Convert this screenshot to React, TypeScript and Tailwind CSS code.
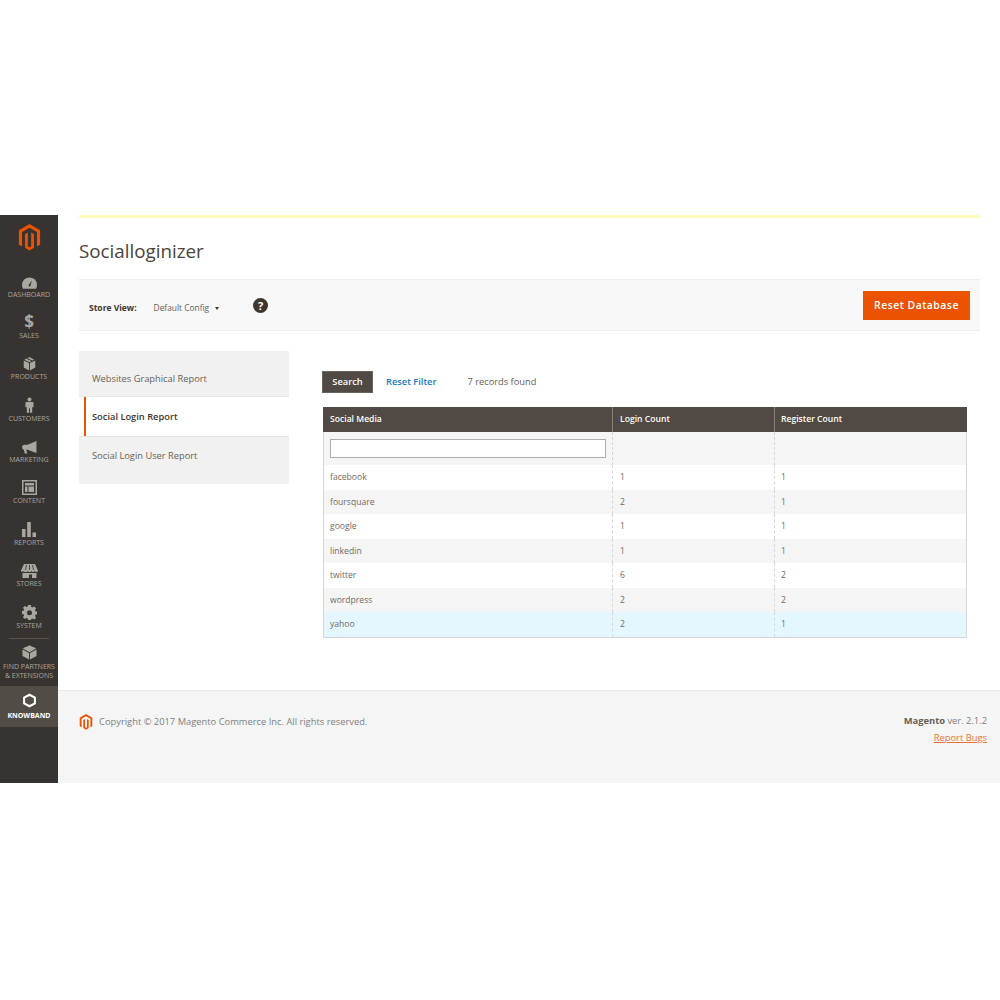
import type { ReactNode } from 'react';

const font = { fontFamily: '"Open Sans", sans-serif' };

function MagentoLogo({ className }: { className: string }) {
  return (
    <svg viewBox="0 0 24 28" className={className} fill="currentColor">
      <path d="M12 0 1 6.400v15l3.300 1.900V8.400L12 4l7.700 4.400v14.900l3.300-1.900v-15z" />
      <path d="m13.700 23-1.700 1-1.700-1V8.900L7.300 10.600v14.100L12 27.400l4.700-2.700V10.600l-3-1.700z" />
    </svg>
  );
}

const icons: Record<string, ReactNode> = {
  dashboard: (
    <svg viewBox="0 0 16 12" className="w-[15px] h-[12px]" fill="currentColor">
      <path d="M8 0a8 8 0 0 0-8 8c0 1.500.4 2.800 1 4h14c.6-1.200 1-2.500 1-4a8 8 0 0 0-8-8z" />
      <path d="M7 8.500 10.500 3 9 9.200a1.100 1.100 0 0 1-2-.7z" fill="#373330" />
    </svg>
  ),
  products: (
    <svg viewBox="0 0 14 15" className="w-[13px] h-[14px]" fill="currentColor">
      <path d="M7 0 4.800 1.100l5 2.600L12 2.800 7 0zM3.600 1.700 1.500 2.800l5.500 2.700 2-1-5.400-2.800zM.8 3.700v7.500L6.500 14.500V6.500L.8 3.700zM13.200 3.700 7.500 6.500v8l5.700-3.300V3.700z" />
    </svg>
  ),
  customers: (
    <svg viewBox="0 0 10 17" className="w-[9px] h-[16px]" fill="currentColor">
      <circle cx="5" cy="2.400" r="2.200" />
      <path d="M2 5.200h6c1 0 1.500.6 1.500 1.500V11H8v6H5.500v-5h-1v5H2v-6H.5V6.700C.5 5.800 1 5.200 2 5.200z" />
    </svg>
  ),
  marketing: (
    <svg viewBox="0 0 16 14" className="w-[15px] h-[13px]" fill="currentColor">
      <path d="M15.500 0v13L6 9.500H4.500L5.600 13.500H3L1.800 9.300C.7 9 0 8 0 6.800 0 5.300 1 4 2.500 4H6l9.500-4z" />
    </svg>
  ),
  content: (
    <svg viewBox="0 0 15 15" className="w-[15px] h-[15px]" fill="currentColor">
      <path fillRule="evenodd" d="M0 0h15v15H0V0zm1.500 1.500v12h12v-12h-12zM3 3h9v2.500H3V3zm0 3.500h2.500V12H3V6.500zm3.500 0H12V12H6.500V6.500z" />
    </svg>
  ),
  reports: (
    <svg viewBox="0 0 14 15" className="w-[14px] h-[15px]" fill="currentColor">
      <path d="M0 7h3.500v8H0zM5.200 0h3.600v15H5.200zM10.500 10.500H14V15h-3.500z" />
    </svg>
  ),
  stores: (
    <svg viewBox="0 0 17 14" className="w-[17px] h-[14px]" fill="currentColor">
      <path d="M3 0h11l3 6.500c0 .9-.8 1.500-1.700 1.500-.8 0-1.400-.4-1.700-1-.3.600-1 1-1.700 1s-1.400-.4-1.700-1c-.3.600-1 1-1.700 1s-1.400-.4-1.700-1c-.3.600-1 1-1.700 1S1.900 7.600 1.700 7C1.400 7.600.9 8 .9 8 .4 8 0 7.300 0 6.500L3 0z" />
      <path d="M1.500 9h14v5H11v-3.500H8V14H1.500V9z" />
      <path d="M5.500 1 4.500 6M8.500 1v5M11.500 1l1 5" stroke="#373330" strokeWidth=".8" />
    </svg>
  ),
  system: (
    <svg viewBox="0 0 16 16" className="w-[15px] h-[15px]" fill="currentColor">
      <path fillRule="evenodd" d="M6.500 0h3l.4 2.200 1.200.5L13 1.500l2 2-1.200 1.900.5 1.200L16 7v3l-1.700.4-.5 1.200 1.200 1.900-2 2-1.900-1.200-1.200.5L9.500 16h-3l-.4-1.700-1.200-.5L3 15l-2-2 1.200-1.900-.5-1.200L0 9.500v-3l1.700-.4.5-1.200L1 3l2-2 1.900 1.200 1.200-.5L6.500 0zM8 5.500a2.700 2.700 0 1 0 0 5.400 2.700 2.700 0 0 0 0-5.400z" />
    </svg>
  ),
  // lego brick seen from above, studs on the top face
  partners: (
    <svg viewBox="0 0 16 15" className="w-[15px] h-[15px]" fill="currentColor">
      <path d="M8 0c1 0 1.800.4 1.900.9l1.500.7c1-.2 2 .2 2.100.8l1.700.9L8 7.200 .8 3.300l1.700-.9c.1-.6 1.100-1 2.100-.8l1.500-.7C6.200.4 7 0 8 0z" />
      <path d="M.5 4.300 7.500 8v7L.5 11.300zM15.500 4.300 8.500 8v7l7-3.700z" />
    </svg>
  ),
  knowband: (
    <svg viewBox="0 0 14 15" className="w-[13px] h-[15px]" fill="none" stroke="currentColor" strokeWidth="2.200">
      <path d="M7 1.300 12.800 4.500v6L7 13.700 1.200 10.500v-6z" />
    </svg>
  ),
};

function NavItem({ icon, label }: { icon: ReactNode; label: ReactNode }) {
  return (
    <div className="h-[41.4px] flex flex-col items-center justify-start text-[#aaa6a0]">
      <div className="h-[18px] flex items-end justify-center">{icon}</div>
      <div className="mt-px text-[7px] leading-[9px] uppercase text-center whitespace-nowrap">{label}</div>
    </div>
  );
}

const rows = [
  ['facebook', '1', '1'],
  ['foursquare', '2', '1'],
  ['google', '1', '1'],
  ['linkedin', '1', '1'],
  ['twitter', '6', '2'],
  ['wordpress', '2', '2'],
  ['yahoo', '2', '1'],
];

export default function App() {
  return (
    <div className="pt-[215px] bg-white" style={font}>
      <div className="flex h-[568px]">
        <aside className="w-[58px] shrink-0 bg-[#373330] flex flex-col">
          <div className="h-[55.5px] pt-[9px] flex justify-center">
            <MagentoLogo className="w-[25px] h-[27px] text-[#eb5202]" />
          </div>
          <NavItem icon={icons.dashboard} label="Dashboard" />
          <NavItem
            icon={<span className="text-[17px] leading-[17px] font-bold">$</span>}
            label="Sales"
          />
          <NavItem icon={icons.products} label="Products" />
          <NavItem icon={icons.customers} label="Customers" />
          <NavItem icon={icons.marketing} label="Marketing" />
          <NavItem icon={icons.content} label="Content" />
          <NavItem icon={icons.reports} label="Reports" />
          <NavItem icon={icons.stores} label="Stores" />
          <NavItem icon={icons.system} label="System" />
          <div className="mx-[9px] mt-[-5.5px] border-t border-[#5a5450]" />
          <div className="h-[47px] pt-[5px] flex flex-col items-center text-[#aaa6a0]">
            <div className="h-[16px] flex items-end">{icons.partners}</div>
            <div className="mt-[2px] text-[7px] leading-[9px] uppercase text-center whitespace-nowrap">
              Find Partners
              <br />& Extensions
            </div>
          </div>
          <div className="h-[41px] bg-[#524c47] flex flex-col items-center pt-[7px] text-white">
            {icons.knowband}
            <div className="mt-[3px] text-[7px] leading-[9px] uppercase font-bold">Knowband</div>
          </div>
        </aside>

        <div className="flex-1 flex flex-col min-w-0">
          <main className="h-[475px] pl-[21px] pr-5">
            <div className="h-[3px] bg-[#fffbbb]" />
            <div className="h-[61px] pt-[5px] flex items-center">
              <h1 className="text-[18.8px] leading-7 text-[#4a433d]">Socialloginizer</h1>
            </div>

            <div className="h-[52px] flex items-center bg-[#f8f8f8] border-y border-[#eeeeee] px-[10px]">
              <span className="mt-[6px] text-[8.5px] font-bold text-[#41362f]">Store View:</span>
              <span className="ml-[17px] mt-[6px] text-[8.4px] text-[#676056]">Default Config</span>
              <span className="ml-[6px] mt-[6px] w-0 h-0 border-x-[2.5px] border-x-transparent border-t-[3px] border-t-[#41362f]" />
              <span className="ml-[34px] w-[15px] h-[15px] rounded-full bg-[#41362f] text-white text-[11px] leading-[15px] font-bold text-center">
                ?
              </span>
              <button className="ml-auto mt-[1px] w-[107px] h-[29px] bg-[#eb5202] text-white text-[10.4px] font-semibold tracking-[0.5px]">
                Reset Database
              </button>
            </div>

            <div className="flex mt-5">
              <nav className="w-[210px] shrink-0 text-[9.3px] text-[#676056]">
                <div className="h-[46px] bg-[#f1f1f1] border-b border-[#e6e6e6] pl-[13px] flex items-center pt-[10px]">
                  Websites Graphical Report
                </div>
                <div className="ml-[5px] h-[39px] bg-white border-l-2 border-[#eb5202] pl-[6px] flex items-center font-semibold text-[#41362f]">
                  Social Login Report
                </div>
                <div className="h-[48px] bg-[#f1f1f1] border-t border-[#e6e6e6] pl-[13px] pb-[9px] flex items-center">
                  Social Login User Report
                </div>
              </nav>

              <section className="ml-[33px] w-[645px] pt-5">
                <div className="flex items-center h-[22px] text-[9.3px]">
                  <button className="w-[51px] h-[22px] bg-[#514943] border border-[#6b635d] text-white font-semibold">
                    Search
                  </button>
                  <a className="ml-[13px] text-[#1979c3] font-semibold">Reset Filter</a>
                  <span className="ml-[31px] text-[#676056]">7 records found</span>
                </div>

                <div className="mt-[14px] ml-px text-[8.6px] text-[#6f6a64] border-x border-b border-[#d6d6d6]">
                  <div className="grid grid-cols-[289px_162px_1fr] h-[25px] -mx-px bg-[#514943] text-white font-semibold">
                    <div className="pl-[7px] flex items-center">Social Media</div>
                    <div className="pl-[7px] flex items-center border-l border-[#8a837d]">Login Count</div>
                    <div className="pl-[6px] flex items-center border-l border-[#8a837d]">Register Count</div>
                  </div>
                  <div className="grid grid-cols-[288px_162px_1fr] h-[33px] bg-[#f5f5f5]">
                    <div className="pl-[6px] flex items-center">
                      <input
                        aria-label="Social Media filter"
                        className="w-[276px] h-[19px] bg-white border border-[#adadad]"
                      />
                    </div>
                    <div className="border-l border-dashed border-[#d6d6d6]" />
                    <div className="border-l border-dashed border-[#d6d6d6]" />
                  </div>
                  {rows.map(([name, login, register], i) => (
                    <div
                      key={name}
                      className={
                        'grid grid-cols-[288px_162px_1fr] h-[24.5px] items-stretch ' +
                        (i === 6 ? 'bg-[#e5f7fe]' : i % 2 === 1 ? 'bg-[#f5f5f5]' : 'bg-white')
                      }
                    >
                      <div className="pl-[6px] pt-px flex items-center">{name}</div>
                      <div className="pl-[7px] pt-px flex items-center border-l border-dashed border-[#d6d6d6]">{login}</div>
                      <div className="pl-[6px] pt-px flex items-center border-l border-dashed border-[#d6d6d6]">{register}</div>
                    </div>
                  ))}
                </div>
              </section>
            </div>
          </main>

          <footer className="h-[93px] bg-[#f5f5f5] border-t border-[#e9e9e9] pl-[21px] pr-[13px] pt-[21px] flex justify-between text-[9.35px] text-[#808080]">
            <div className="flex items-start">
              <MagentoLogo className="w-[14px] h-[16px] mt-[2px] text-[#eb5202]" />
              <span className="ml-[6px] mt-[2px] leading-[16px]">Copyright © 2017 Magento Commerce Inc. All rights reserved.</span>
            </div>
            <div className="text-right mt-[1px] leading-[16px]">
              <div>
                <span className="font-bold text-[#676056]">Magento</span> ver. 2.1.2
              </div>
              <a className="block mt-px text-[#eb5202] underline opacity-80">Report Bugs</a>
            </div>
          </footer>
        </div>
      </div>
    </div>
  );
}
